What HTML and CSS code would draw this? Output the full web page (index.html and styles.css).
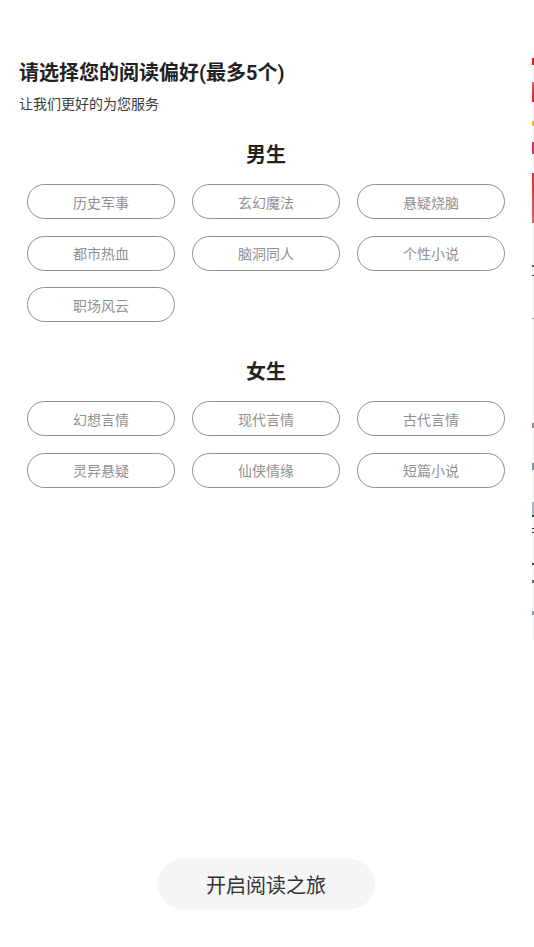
FILE: index.html
```html
<html>
    <head>
        <meta charset="utf-8">
        <title>阅读偏好</title>
        <link rel="stylesheet" href="styles.css">
    </head>
    <body>
        <div class="screen">
            <!-- 主页面 -->
            <div class="page">
                <h1 class="title">请选择您的阅读偏好(最多5个)</h1>
                <p class="subtitle">让我们更好的为您服务</p>

                <!-- 男生分类 -->
                <h2 class="group-title">男生</h2>
                <div class="tags">
                    <span class="tag">历史军事</span>
                    <span class="tag">玄幻魔法</span>
                    <span class="tag">悬疑烧脑</span>
                    <span class="tag">都市热血</span>
                    <span class="tag">脑洞同人</span>
                    <span class="tag">个性小说</span>
                    <span class="tag">职场风云</span>
                </div>

                <!-- 女生分类 -->
                <h2 class="group-title girl">女生</h2>
                <div class="tags">
                    <span class="tag">幻想言情</span>
                    <span class="tag">现代言情</span>
                    <span class="tag">古代言情</span>
                    <span class="tag">灵异悬疑</span>
                    <span class="tag">仙侠情缘</span>
                    <span class="tag">短篇小说</span>
                </div>

                <div class="start">开启阅读之旅</div>
            </div>
            <!-- 右侧露出的下一页 -->
            <div class="peek"></div>
        </div>
    </body>
</html>
```

FILE: styles.css
```css
*{
    margin: 0;
    padding: 0;
    box-sizing: border-box;
}
body{
    background-color: #fff;
    font-family: Roboto, "Noto Sans CJK SC", sans-serif;
    color: #222;
}
.screen{
    display: flex;
    width: 534px;
    height: 947px;
}
/* 主页面 */
.page{
    width: 532px;
    display: flex;
    flex-direction: column;
    padding: 59px 0 38px;
}
.title{
    font-size: 20px;
    line-height: 28px;
    font-weight: bold;
    margin-left: 19px;
    color: #222;
}
.subtitle{
    font-size: 14px;
    line-height: 20px;
    margin: 7px 0 0 19px;
    color: #3a3a3a;
}
.group-title{
    font-size: 20px;
    line-height: 28px;
    font-weight: bold;
    text-align: center;
    margin-top: 27px;
    color: #222;
}
.group-title.girl{
    margin-top: 36px;
}
/* 标签 */
.tags{
    display: grid;
    grid-template-columns: repeat(3, 148px);
    column-gap: 17px;
    row-gap: 16.5px;
    margin: 15px auto 0;
}
.tag{
    height: 35px;
    border: 1.5px solid #8f8f8f;
    border-radius: 18px;
    display: flex;
    align-items: center;
    justify-content: center;
    font-size: 14px;
    color: #909090;
}
/* 底部按钮 */
.start{
    margin: auto auto 0;
    width: 218px;
    height: 50px;
    border-radius: 25px;
    background-color: #f5f5f5;
    display: flex;
    align-items: center;
    justify-content: center;
    font-size: 20px;
    color: #333;
}
.peek{
    width: 2px;
    margin-top: 55px;
    height: 585px;
    background: linear-gradient(to bottom,
        #f3f3f3 0, #f3f3f3 3px,
        #e02020 3px, #e02020 10px,
        #f6f6f6 10px, #f6f6f6 27px,
        #e86060 27px, #d81e1e 47px,
        #f6f6f6 47px, #f6f6f6 66px,
        #f4b63a 66px, #f4b63a 71px,
        #f6f6f6 71px, #f6f6f6 87px,
        #e0306a 87px, #e0306a 99px,
        #f6f6f6 99px, #f6f6f6 118px,
        #d83030 118px, #e06060 168px,
        #f6f6f6 168px, #f6f6f6 210px,
        #555 210px, #555 212px,
        #f6f6f6 212px, #f6f6f6 220px,
        #333 220px, #333 221px,
        #f6f6f6 221px, #f6f6f6 263px,
        #999 263px, #999 264px,
        #f6f6f6 264px, #f6f6f6 368px,
        #9a8aa0 368px, #9a8aa0 373px,
        #f6f6f6 373px, #f6f6f6 408px,
        #8894a8 408px, #8894a8 415px,
        #f6f6f6 415px, #f6f6f6 447px,
        #a8b4c8 447px, #a8b4c8 460px,
        #444 460px, #444 462px,
        #f6f6f6 462px, #f6f6f6 473px,
        #333 473px, #333 474px,
        #f6f6f6 474px, #f6f6f6 477px,
        #333 477px, #333 478px,
        #f6f6f6 478px, #f6f6f6 508px,
        #444 508px, #444 510px,
        #f6f6f6 510px, #f6f6f6 525px,
        #666 525px, #666 528px,
        #f6f6f6 528px, #f6f6f6 556px,
        #8894a8 556px, #8894a8 560px,
        #f6f6f6 560px);
}
```
